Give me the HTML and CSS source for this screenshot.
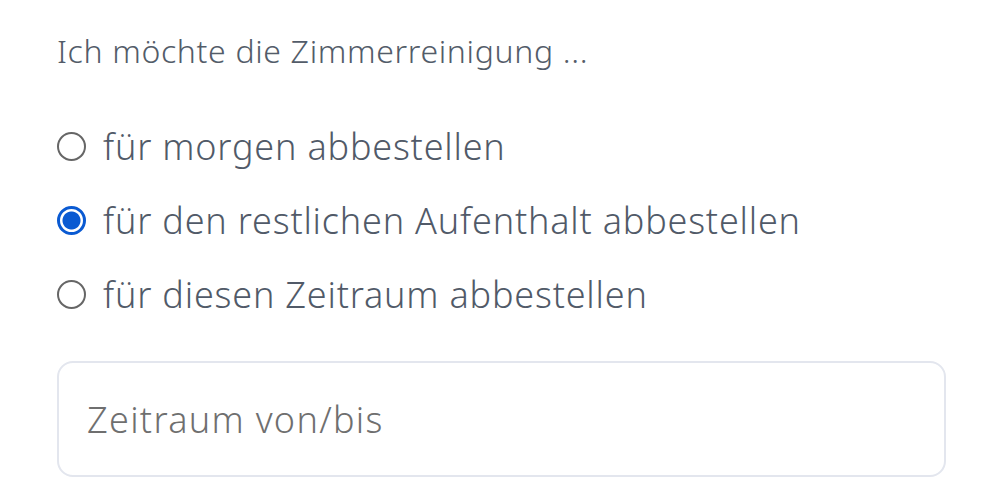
FILE: index.html
```html
<!DOCTYPE html>
<html lang="de">
<head>
<meta charset="utf-8">
<link rel="stylesheet" href="styles.css">
</head>
<body>
<div class="form">
  <p class="question">Ich möchte die Zimmerreinigung ...</p>
  <div class="options">
    <label class="option"><input type="radio" name="r" class="radio"><span>für morgen abbestellen</span></label>
    <label class="option"><input type="radio" name="r" class="radio" checked><span>für den restlichen Aufenthalt abbestellen</span></label>
    <label class="option"><input type="radio" name="r" class="radio"><span>für diesen Zeitraum abbestellen</span></label>
  </div>
  <input class="range" type="text" placeholder="Zeitraum von/bis">
</div>
</body>
</html>
```
FILE: styles.css
```css
html, body {
  margin: 0;
  padding: 0;
  background: #ffffff;
}
.form {
  padding: 31px 0 0 57px;
  font-family: "Noto Sans", sans-serif;
  font-weight: 300;
}
.question {
  margin: 0;
  font-size: 32px;
  line-height: 40px;
  letter-spacing: 0.65px;
  color: #535c69;
}
.options {
  display: flex;
  flex-direction: column;
  margin-top: 38px;
}
.option {
  display: flex;
  align-items: center;
  gap: 17px;
  height: 74px;
  font-size: 36px;
  letter-spacing: 0.8px;
  color: #515a68;
}
.radio {
  appearance: none;
  -webkit-appearance: none;
  margin: 0;
  width: 29px;
  height: 29px;
  border-radius: 50%;
  border: 2.5px solid #666666;
  box-sizing: border-box;
  background: #fff;
  flex: none;
}
.radio:checked {
  border: 3px solid #0a5ad2;
  background: radial-gradient(circle, #0a5ad2 0 8.5px, #ffffff 9.5px);
}
.range {
  display: block;
  margin-top: 30px;
  width: 889px;
  height: 116px;
  box-sizing: border-box;
  border: 2px solid #e3e6ee;
  border-radius: 16px;
  padding: 0 0 0 28px;
  font-family: "Noto Sans", sans-serif;
  font-weight: 300;
  font-size: 36px;
  letter-spacing: 1.3px;
  color: #555;
  outline: none;
}
.range::placeholder {
  color: #6f6f6f;
}
```
